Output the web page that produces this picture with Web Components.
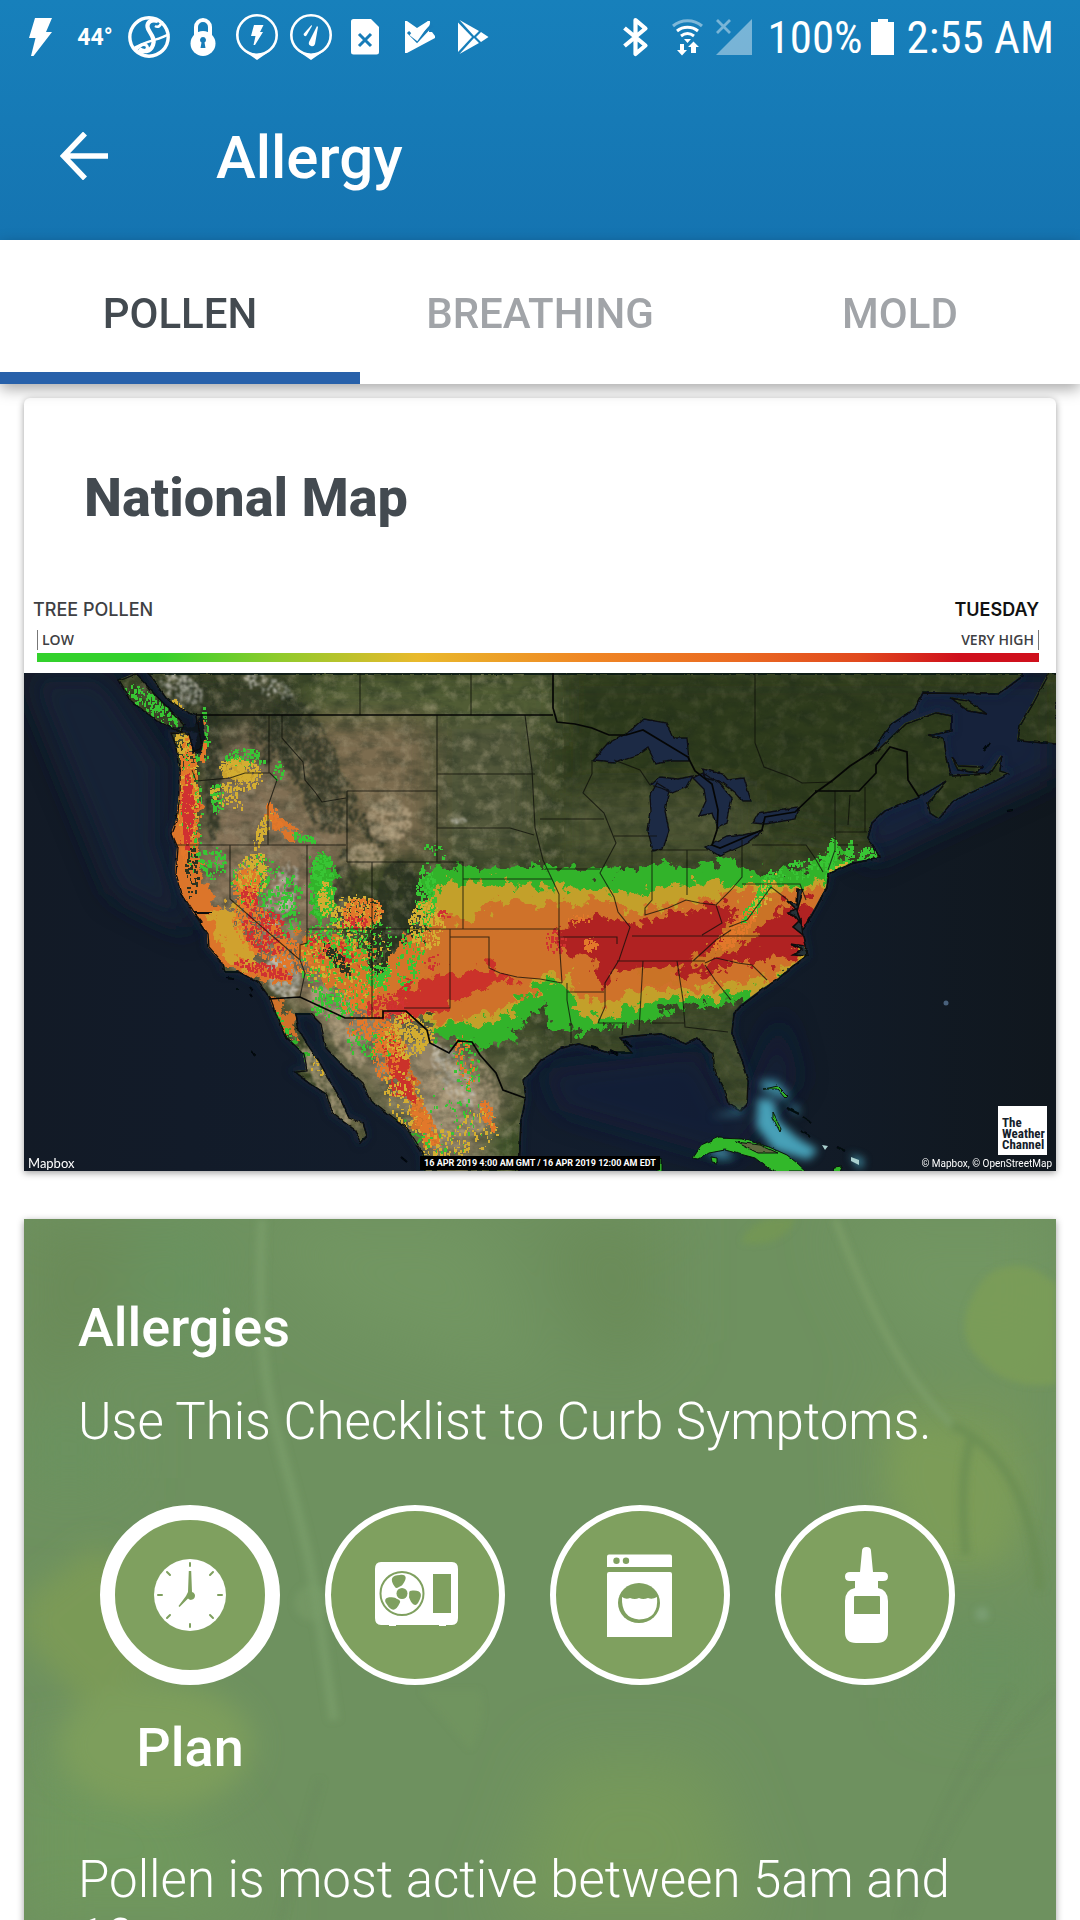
<!DOCTYPE html>
<html lang="en">
<head>
<meta charset="utf-8">
<meta name="viewport" content="width=device-width, initial-scale=1">
<title>Allergy</title>
<style>
  html, body { margin: 0; height: 100%; background: #fff; font-family: Roboto, "Open Sans", sans-serif; }
</style>
</head>
<body>
<allergy-app></allergy-app>
<script>
const define = (name, html, setup) => {
  const template = document.createElement('template');
  template.innerHTML = html;
  customElements.define(name, class extends HTMLElement {
    connectedCallback() {
      if (this.shadowRoot) return;
      const root = this.attachShadow({ mode: 'open' });
      root.append(template.content.cloneNode(true));
      if (setup) setup(this, root);
    }
  });
};

/* ---------- Icons ---------- */
const PIN = '<circle cx="27" cy="35" r="19.7" fill="none" stroke="#fff" stroke-width="2.6"/><path d="M14 51Q27 57 40 51L27 60z"/>';
const BLADE = 'M29 42C23 34 26 30 34 30c7-1 7 4 3 9-1 2-3 2-4 3q-3 2-4 0z';
const ICONS = {
  bolt: ['0 0 54 72', '<path d="M21 18h17L32 32h6L19.5 56H17l4.500-18H15z"/>'],
  script: ['0 0 54 72', '<circle cx="27" cy="37" r="19.2" fill="none" stroke="#fff" stroke-width="3.4"/><g fill="none" stroke="#fff"><path d="M36 21C29 19 25 22 25.500 27S34 37 31 45 21 52 17 49" stroke-width="4.200"/><path d="M40 21C39 26 36 28 33 26" stroke-width="2.6"/><path d="M11 49C22 41 38 40 47 34" stroke-width="2.4"/><path d="M13 51C18 44 23 43 25 46S21 54 17 52" stroke-width="3"/></g>'],
  lock: ['0 0 54 72', '<circle cx="27" cy="43.5" r="12.5"/><path d="M20 36V27a7 7 0 0 1 14 0v9" fill="none" stroke="#fff" stroke-width="4"/><path d="M27 37a3 3 0 0 1 1.500 5.600L29.500 48h-5l1-5.400A3 3 0 0 1 27 37z" fill="#187cb8"/>'],
  pinBolt: ['0 0 54 72', PIN + '<path d="M24 25h9.500L30 32h3L25 45h-1.500l2-9H21z"/>'],
  pinRain: ['0 0 54 72', PIN + '<path d="M33 26 34 27 31 44A3 3 0 0 1 25 42z"/><path d="M27.500 25 28 26 22.500 35.500a1.500 1.500 0 0 1-2.500-2z"/>'],
  fileX: ['0 0 54 72', '<path d="M15.500 19h17.500l8 8v25a2.500 2.500 0 0 1-2.500 2.500h-23A2.500 2.500 0 0 1 13 52V21.500A2.500 2.500 0 0 1 15.500 19z"/><path d="m21 34 12 12m0-12L21 46" stroke="#187cb8" stroke-width="3"/>'],
  check: ['0 0 54 72', '<path d="M13 21h2L25 28 36 21h2l-1 11h3l3 4v2L15 53h-2z"/><path d="m16 32 9 9L40 25" fill="none" stroke="#187cb8" stroke-width="3"/><path d="m18.500 34 6.500 5L37 22" fill="none" stroke="#fff" stroke-width="3"/>'],
  play: ['0 0 54 72', '<path d="M12 22.500 26 37 12 52z"/><path d="M13.500 20 33 31l-5 5zM13.500 54 33 43l-5-5zM35 32l7.500 5-7.500 5-5-5z"/>'],
  bluetooth: ['0 0 54 72', '<path d="m19.500 28 21 17.500L30.500 54V20l10 8.500-21 17.500" fill="none" stroke="#fff" stroke-width="4.200" stroke-linejoin="round"/>'],
  wifi: ['0 0 54 72', '<g fill="none" stroke="#fff" stroke-width="3"><path d="M14 26c8-7 21-7 29 0" opacity=".45"/><path d="M18 31c6-5 15-5 21 0M22 36c4-3 9-3 13 0"/></g><path d="M25 39h7l-3.500 4z"/><path d="M21 44h4v6h3l-5 5.500-5-5.500h3zM32 53h5v-6h3l-5.500-5.500L29 47h3z"/>'],
  signal: ['0 0 54 72', '<g opacity=".42"><path d="M39 19v36H3z"/><path d="m4 20 13 13m0-13L4 33" stroke="#fff" stroke-width="2.8"/></g>'],
  battery: ['0 0 24 72', '<path d="M7 19h10v3h6v33H0V22h7z"/>'],
  clock: ['0 0 100 100', '<circle cx="50" cy="50" r="36"/><g stroke="#7fa05f" stroke-width="2" stroke-linecap="round"><path d="M50 18v3M50 79v3M18 50h4M78 50h4M27 27l3 3M70 30l3-3M27 73l3-3M70 70l3 3"/></g><path d="M48.800 26h2.400l.8 21a4 4 0 1 1-4 6.500L39.500 62l-1-1L46 51l2-4z" fill="#7fa05f"/>'],
  fan: ['0 0 100 100', `<path d="M16 17h71q6 0 6 7v49q0 7-6 7h-6v1h-7v-1H31v1h-7v-1h-8q-6 0-6-7V24q0-7 6-7z"/><g fill="#7fa05f"><path d="M68 29h18v39H68z"/><circle cx="37" cy="48.5" r="21.5" fill="none" stroke="#7fa05f" stroke-width="2"/><circle cx="37" cy="48.5" r="5.5"/><g transform="translate(1 0)"><path d="${BLADE}"/><path d="${BLADE}" transform="rotate(120 36 48.5)"/><path d="${BLADE}" transform="rotate(240 36 48.5)"/></g></g>`],
  washer: ['0 0 100 100', '<path d="M19 9.500h61a2 2 0 0 1 2 2V22H17V11.500a2 2 0 0 1 2-2zM19 27h61a2 2 0 0 1 2 2v63H17V29a2 2 0 0 1 2-2z"/><g fill="#7fa05f"><circle cx="26.5" cy="15.7" r="3.2"/><circle cx="36" cy="15.7" r="3.2"/><ellipse cx="49" cy="58" rx="21" ry="20"/></g><path d="M32 52q4 3 8 1 5 2 9 0 4 2 9 0 4 2 9-1Q69 74 49 74.500 31 73 32 52z"/>'],
  spray: ['0 0 100 100', '<path d="M47 6q0-4 4.500-4T56 6l2 21h10q5 0 5 4.500T68 36h-5v7q10 2 10 13v31q0 11-11 11H41q-11 0-11-11V56q0-11 10-13v-7h-5q-5 0-5-4.500T35 27h10z"/><path d="M40 51h24q1 0 1 1v17H39V52q0-1 1-1z" fill="#7fa05f"/>'],
  back: ['0 0 48 48', '<path d="M25 1.500 3.500 24 25 46.500M4 24h44" fill="none" stroke="#fff" stroke-width="5.5"/>']
};
define('ui-icon', `<style>
  :host { display: block; width: 54px; height: 72px; flex: none; }
  svg { display: block; width: 100%; height: 100%; fill: #fff; }
</style><svg aria-hidden="true"></svg>`, (el, root) => {
  const [box, art] = ICONS[el.getAttribute('name')];
  const svg = root.querySelector('svg');
  svg.setAttribute('viewBox', box);
  svg.innerHTML = art;
});

/* ---------- Status bar and toolbar ---------- */
define('status-bar', `<style>
  :host { display: flex; align-items: center; justify-content: space-between; height: 72px; padding: 0 26px 0 14px; color: #fff; }
  div { display: flex; align-items: center; }
  .temp { width: 54px; padding-top: 4px; text-align: center; font: bold 23px/24px Roboto, sans-serif; }
  .text { padding-top: 4px; font: 45px/48px "Roboto Condensed", Roboto, sans-serif; white-space: nowrap; }
  .battery { width: 24px; margin: 0 12px 0 8px; }
</style>
<div><ui-icon name="bolt"></ui-icon><span class="temp">44°</span><ui-icon name="script"></ui-icon><ui-icon name="lock"></ui-icon><ui-icon name="pinBolt"></ui-icon><ui-icon name="pinRain"></ui-icon><ui-icon name="fileX"></ui-icon><ui-icon name="check"></ui-icon><ui-icon name="play"></ui-icon></div>
<div><ui-icon name="bluetooth"></ui-icon><ui-icon name="wifi"></ui-icon><ui-icon name="signal"></ui-icon><span class="text">100%</span><ui-icon class="battery" name="battery"></ui-icon><span class="text">2:55 AM</span></div>`);

define('app-toolbar', `<style>
  :host { display: flex; align-items: center; gap: 84px; height: 168px; padding: 0 36px; color: #fff; }
  button { display: grid; place-items: center; width: 96px; height: 96px; border: 0; padding: 0; background: none; }
  ui-icon { width: 48px; height: 48px; }
  h1 { margin: 0; padding-top: 4px; font: 500 60px/72px Roboto, sans-serif; }
</style><button aria-label="Back"><ui-icon name="back"></ui-icon></button><h1><slot></slot></h1>`);

define('app-tab', `<style>
  :host { display: block; flex: 1; }
  button { display: block; width: 100%; height: 144px; border: 0; padding: 4px 0 0; background: none; color: #a1a4a8; font: 500 42px/48px Roboto, sans-serif; }
  :host([selected]) button { color: #434a50; box-shadow: inset 0 -12px #2861aa; }
</style><button role="tab"><slot></slot></button>`, (el, root) => {
  root.querySelector('button').setAttribute('aria-selected', el.hasAttribute('selected'));
});
define('tab-bar', `<style>
  :host { display: flex; background: #fff; position: relative; z-index: 1; box-shadow: 0 5px 14px rgba(0,0,0,.34); }
</style><slot></slot>`);

/* ---------- Map card ---------- */
define('pollen-legend', `<style>
  :host { display: block; padding: 7px 17px 11px 9px; color: #3e4043; }
  div { display: flex; justify-content: space-between; }
  .head { font: 500 18px/22px Inter, sans-serif; }
  .head b { font-weight: 600; color: #111; }
  .scale { margin: 9px 0 0 4px; padding: 0 4px; font: 600 14px/20px "Open Sans", sans-serif; border: solid #777; border-width: 0 1px; }
  .bar { height: 9px; margin: 3px 0 0 4px; background: linear-gradient(90deg, #33d12c 12%, #8fcb2c 24%, #e9b92c 38%, #ef8624 55%, #ea6a22 70%, #e14a1e 82%, #cf101c 92%); }
</style>
<div class="head"><span>TREE POLLEN</span><b>TUESDAY</b></div>
<div class="scale"><span>LOW</span><span>VERY HIGH</span></div>
<div class="bar"></div>`);

const LAND = 'M148 673 165 697 179 708 196 715 199 735 201 747 193 752 188 733 170 732 176 747 179 767 179 793 176 820 171 833 177 847 175 873 181 893 193 912 207 933 208 947 222 963 224 971 238 971 258 982 269 997 275 1013 286 1037 303 1053 306 1070 294 1071 310 1083 325 1093 332 1113 355 1130 360 1142 366 1135 362 1122 348 1117 339 1097 327 1077 319 1062 306 1043 298 1030 295 1013 310 1013 320 1023 325 1047 344 1067 362 1083 370 1100 389 1115 406 1128 422 1153 424 1171H518L520 1120 525 1098 523 1080 540 1060 561 1047 578 1043 609 1052 631 1052 619 1037 633 1035 661 1033 685 1043 697 1037 712 1053 714 1070 723 1087 728 1103 740 1110 747 1103 748 1080 740 1057 731 1033 733 1013 740 1005 760 990 778 978 793 965 807 955 802 930 815 907 826 887 828 873 853 862 879 857 867 837 871 822 884 810 917 797 946 780 927 803 929 812 938 818 953 800 995 780 1008 773 999 770 1001 755 989 773 950 775 945 753 943 738 927 735 951 730 951 715 936 712 905 723 877 750 871 753 891 723 914 708 922 692 998 693 1022 675V673z';
const ISLANDS = 'M118 680 135 673 160 700 184 724 181 732 156 720 130 700zM1048 673 1032 703 1019 725 1017 740 1056 743V673zM950 697 967 700 986 713 967 710zM951 757 958 765 982 766 977 772 957 769z';
const LAKES = 'M592 760 607 743 630 730 643 718 666 722 673 737 686 737 688 760 671 760 655 763 647 747 636 755 614 762zM656 782 669 790 664 810 668 830 662 848 652 850 647 830 650 810 649 795zM650 784 659 776 677 778 692 775 686 786 672 792 660 787zM692 777 702 772 719 783 731 797 726 823 717 827 712 812 698 815 705 800 703 788zM702 768 722 773 727 779 743 777 750 800 742 800 735 792 722 782 704 777zM705 847 726 836 742 834 762 830 747 842 719 855zM752 822 757 813 775 810 798 807 795 818 764 823z';
const STATES = 'M360 673V715M471 673V715M269 715V773M282 715V738L303 762 305 780 315 792 322 802 346 798M347 791V862M347 791H437M437 715V862M347 862H463V929M437 774H535M437 828H510L534 835M177 845H346M192 770 196 781 230 778 245 773 270 773 277 780 268 806V845M307 845V943L300 945V960L305 973 300 997M230 845V899L300 960M372 862V1018M307 929H559M463 879H552M450 929V1008H404M450 937H489V968L500 973 517 977 540 979 562 983M525 715 532 770 535 828 543 860 559 894V937L562 983M559 937H617V944M567 983V1000L571 1023V1043M567 992H604M643 961 639 1031M617 961H705M632 936H803M677 961 683 1000 685 1027 728 1032M598 1023H623L622 1035M650 1023H684M592 760V774L583 793 604 813 616 843 600 873 614 897 618 912 630 927 619 960 605 983V1007L598 1023M540 819H604M545 869H600M614 836H657M652 850V900L645 908 645 915 668 908 686 900 700 903 716 905 731 890 742 877V840M687 850V895M708 850H652M742 884H800L806 900M752 845H806L815 858 823 872M702 935 722 923 716 905M693 961 716 940 731 930M705 963 716 958 738 963 752 965 767 980M705 965 715 980 731 1000M729 927 747 920 771 887 788 900M835 791V850L828 870M865 787V832M850 795 848 825M836 832H867M839 845H858M614 760 640 770 650 785M755 673V743L764 767 791 777 802 783 833 782';
const BORDERS = 'M196 715H553M553 673V708L557 722 575 724 592 728 609 735 626 735 643 730 688 757 695 771 712 784 718 810 717 830 712 845 720 848 762 830 765 817 795 812 815 793 833 780 850 766 864 757 877 748M815 791H859L876 773V765L890 747 907 752 908 780 919 797M269 999 300 997 345 1018H383V1011H406L427 1030 430 1043 449 1053 458 1041 472 1042 480 1055 496 1073 503 1090 525 1098';

/* Scattered cells: [colour, centre x, centre y, radius x, radius y, tilt, cell count] */
const G = '#38c534', Y = '#d3ad31', O = '#e2782a', R = '#d03131', DK = '#2b3321', TN = '#b7a585', WH = '#d6d4cb';
const TERRAIN = [
  [WH, 180, 688, 24, 14, 30, 150], [WH, 268, 684, 26, 9, 20, 70], [DK, 200, 700, 40, 25, 0, 170], [DK, 212, 770, 8, 70, 0, 420], [DK, 305, 750, 26, 60, -25, 1300],
  [DK, 265, 735, 16, 26, 0, 200], [DK, 330, 800, 26, 34, -20, 420], [DK, 370, 830, 10, 22, -35, 100], [DK, 398, 905, 22, 46, 0, 1300], [DK, 345, 890, 12, 44, 0, 260],
  [TN, 388, 818, 22, 22, 0, 400], [TN, 365, 855, 18, 12, 0, 200], [WH, 280, 895, 14, 36, 18, 190], [WH, 282, 975, 16, 22, -20, 300], [TN, 330, 1000, 24, 16, 20, 320], [TN, 345, 1040, 10, 30, -30, 260],
  [WH, 452, 1075, 14, 36, -30, 260], [TN, 460, 1095, 38, 40, 0, 700], [TN, 430, 1110, 14, 40, -20, 120], [WH, 458, 820, 7, 3, 0, 16], [TN, 325, 1085, 10, 50, -30, 360]
];
const CELLS = [
  [G, 150, 705, 34, 10, 38, 130], [G, 182, 722, 10, 10, 40, 30], [Y, 180, 708, 12, 3, 50, 26], [G, 204, 735, 4, 30, 0, 50], [O, 195, 722, 10, 5, 0, 24], [Y, 181, 742, 7, 12, 0, 50], [O, 201, 745, 3, 16, 0, 50],
  [G, 191, 805, 11, 66, 0, 120], [Y, 187, 790, 11, 55, 0, 170], [O, 187, 800, 9, 70, 0, 300], [R, 187, 810, 5, 40, 0, 240], [G, 212, 862, 14, 16, 0, 80], [DK, 191, 872, 6, 26, 0, 50],
  [G, 244, 757, 20, 9, 0, 90], [Y, 240, 768, 22, 9, 10, 160], [Y, 240, 783, 22, 6, -10, 70], [G, 216, 797, 7, 16, 0, 60], [Y, 225, 795, 20, 9, 30, 50], [G, 278, 768, 6, 12, 0, 20],
  [Y, 262, 828, 5, 22, 25, 80], [O, 273, 815, 5, 15, -25, 60], [G, 303, 837, 12, 4, 20, 40],
  [G, 255, 880, 26, 28, 0, 130], [Y, 252, 874, 14, 24, 10, 200], [O, 246, 886, 13, 20, 10, 150], [R, 248, 897, 8, 12, 0, 46],
  [G, 322, 884, 13, 34, 0, 200], [Y, 325, 898, 8, 18, 0, 90], [G, 275, 895, 25, 30, 20, 70],
  [O, 258, 930, 20, 34, -40, 320], [R, 265, 930, 20, 26, -40, 200], [G, 290, 910, 10, 34, 0, 70], [R, 262, 968, 30, 6, 15, 110],
  [O, 292, 955, 12, 26, -40, 150], [Y, 355, 912, 26, 18, 0, 200], [G, 350, 935, 45, 20, 0, 160], [O, 362, 910, 20, 14, 0, 200], [R, 355, 922, 14, 6, 0, 50],
  [Y, 345, 960, 46, 40, 0, 260], [G, 345, 965, 48, 40, 20, 260], [DK, 336, 958, 6, 20, -40, 70], [DK, 378, 950, 12, 24, 0, 130], [G, 376, 975, 12, 10, -30, 90], [R, 318, 945, 12, 12, 0, 34],
  [G, 333, 1005, 24, 14, 0, 110], [O, 360, 1000, 20, 18, 0, 120], [R, 385, 1005, 22, 12, -10, 120], [G, 425, 895, 10, 34, 0, 150], [G, 410, 955, 14, 34, 10, 90], [Y, 425, 925, 18, 24, 0, 180], [R, 432, 960, 8, 8, 0, 16], [R, 442, 915, 6, 6, 0, 14],
  [G, 283, 1032, 5, 26, -26, 60], [Y, 318, 1065, 8, 10, -30, 24],
  [G, 372, 1040, 26, 18, 0, 90], [O, 365, 1028, 20, 10, 0, 80], [Y, 405, 1035, 22, 22, 0, 260], [O, 385, 1050, 14, 30, 0, 160], [Y, 420, 1035, 14, 10, 0, 60],
  [Y, 405, 1100, 18, 34, -30, 120], [O, 425, 1125, 8, 28, -25, 160], [Y, 445, 1145, 24, 18, 0, 100], [G, 465, 1060, 14, 30, -10, 70], [O, 464, 1060, 8, 30, -10, 50], [O, 488, 1115, 6, 16, -20, 70], [Y, 475, 1130, 22, 24, 0, 50], [G, 450, 1120, 34, 34, 0, 50],
  [G, 830, 858, 5, 22, 8, 140], [G, 848, 855, 4, 16, 10, 70], [G, 868, 857, 12, 10, 0, 110], [Y, 842, 867, 14, 4, -15, 45], [G, 800, 868, 30, 10, -20, 70], [G, 762, 890, 5, 26, 25, 130], [G, 748, 910, 4, 14, 30, 50], [G, 435, 850, 12, 6, 20, 14],
  [Y, 762, 895, 8, 26, 30, 60], [O, 740, 925, 8, 22, 40, 90], [O, 725, 940, 8, 14, 50, 70], [O, 590, 943, 7, 7, 0, 44], [O, 580, 918, 12, 4, 0, 20], [R, 555, 940, 10, 14, 0, 40]
];
const scatter = list => {
  let seed = 7;
  const rnd = () => (seed = (seed * 16807) % 2147483647) / 2147483647;
  return list.map(([fill, cx, cy, rx, ry, tilt, count]) => {
    const a = tilt * Math.PI / 180, c = Math.cos(a), s = Math.sin(a);
    let d = '';
    for (let i = 0; i < count; i++) {
      const t = rnd() * 6.283, r = Math.sqrt(rnd()), x = rx * r * Math.cos(t), y = ry * r * Math.sin(t);
      const w = 1 + Math.round(rnd() * 2), h = 1 + Math.round(rnd() * 3);
      d += `M${Math.round(cx + x * c - y * s)} ${Math.round(cy + x * s + y * c)}h${w}v${h}h-${w}z`;
    }
    return `<path fill="${fill}" d="${d}"/>`;
  }).join('');
};

define('pollen-map', `<style>
  :host { display: block; position: relative; color: #fff; }
  svg { display: block; width: 100%; height: auto; }
  span { position: absolute; white-space: nowrap; }
  .brand { left: 4px; bottom: 0; font: 13px/16px Lato, sans-serif; }
  .time { left: 50%; bottom: 1px; transform: translateX(-50%); padding: 0 4px; background: #000; font: bold 9px/14px Roboto, sans-serif; }
  .credit { right: 4px; bottom: 0; font: 10px/14px Roboto, sans-serif; }
  .twc { right: 9px; bottom: 16px; box-sizing: border-box; width: 49px; height: 49px; padding: 11px 0 0 4px; background: #fff; color: #14202a; font: bold 13px/11px "Roboto Condensed", Roboto, sans-serif; white-space: normal; }
</style>
<svg viewBox="24 673 1032 498" role="img" aria-label="Tree pollen map of the United States">
  <defs>
    <clipPath id="land"><path d="${LAND}"/><path d="${ISLANDS}"/></clipPath>
    <filter id="soft" x="-30%" y="-30%" width="160%" height="160%"><feGaussianBlur stdDeviation="14"/></filter>
    <filter id="glow" x="-30%" y="-30%" width="160%" height="160%"><feGaussianBlur stdDeviation="4"/></filter>
    <filter id="haze" x="-5%" y="-5%" width="110%" height="110%"><feGaussianBlur stdDeviation="1.2"/></filter>
    <filter id="line" x="-5%" y="-5%" width="110%" height="110%"><feTurbulence baseFrequency=".09" numOctaves="2" seed="9"/><feDisplacementMap in="SourceGraphic" scale="3" xChannelSelector="R" yChannelSelector="G"/></filter>
    <filter id="ragged" x="-5%" y="-5%" width="110%" height="110%"><feTurbulence type="fractalNoise" baseFrequency=".09" numOctaves="4" seed="12"/><feDisplacementMap in="SourceGraphic" scale="30" xChannelSelector="R" yChannelSelector="G"/></filter>
    <filter id="grain" x="0" y="0" width="100%" height="100%"><feTurbulence type="fractalNoise" baseFrequency=".05 .09" numOctaves="6" seed="3"/><feColorMatrix values="0 0 0 0 0.01  0 0 0 0 0.02  0 0 0 0 0.01  2 0 0 0 -.75"/></filter>
    <filter id="light" x="0" y="0" width="100%" height="100%"><feTurbulence type="fractalNoise" baseFrequency=".08" numOctaves="6" seed="21"/><feColorMatrix values="0 0 0 0 .6  0 0 0 0 .52  0 0 0 0 .34  0 2 0 0 -.95"/></filter>
    <linearGradient id="sea"><stop stop-color="#121a26"/><stop offset=".16" stop-color="#121b29"/><stop offset=".6" stop-color="#131e2e"/><stop offset="1" stop-color="#10171e"/></linearGradient>
  </defs>
  <rect x="24" y="673" width="1032" height="498" fill="url(#sea)"/>
  <g filter="url(#soft)"><path d="M850 673h206v100l-130 60-60 30z" fill="#16223a"/><path d="M24 673h80l60 90v80l30 90-80-40z" fill="#142036"/><path d="M540 1070 700 1050 735 1120 780 1010 800 1080 730 1160 560 1110z" fill="#15213a" opacity=".6"/></g>
  <g filter="url(#glow)"><path d="${LAND}" fill="none" stroke="#1d3148" stroke-width="4" opacity=".7"/></g>
  <g clip-path="url(#land)">
    <rect x="24" y="673" width="1032" height="498" fill="#3b4625"/>
    <g filter="url(#soft)">
      <path d="M560 673h500v140l-200 30-300-60z" fill="#2d3b1e"/>
      <path d="M300 673h260v60H310z" fill="#515d36"/>
      <path d="M130 673h150l30 60-20 90-90-50z" fill="#3a412c"/>
      <path d="M310 720h120v140H190l20-80 60-10z" fill="#7c6c50"/>
      <path d="M437 720h100v140H437z" fill="#53583a"/>
      <path d="M225 745l45-15v60l70 40v120l70 40-40 60-200-130z" fill="#857258"/>
      <path d="M290 1000l150 30 60 60 15 80H430l-70-100z" fill="#96866a"/>
      <path d="M355 1055l75 90-10 26-80-100z" fill="#4a5530"/>
      <path d="M480 1120h40v51h-40z" fill="#3f562c"/>
      <path d="M490 1040h60l-20 60-30-10z" fill="#565d3d"/>
      <path d="M530 1020h250l-35 100-50-80H540z" fill="#424d2f"/>
      <path d="M560 790h190v70H560z" fill="#4b5232"/>
      <path d="M330 1060l30 80h20l-50-90z" fill="#a08d6c"/>
    </g>
    <g filter="url(#haze)" opacity=".75">${scatter(TERRAIN)}</g>
    <rect x="24" y="673" width="1032" height="498" filter="url(#grain)" opacity=".4"/>
    <rect x="24" y="673" width="540" height="498" filter="url(#light)" opacity=".4"/>
    <rect x="564" y="673" width="492" height="498" filter="url(#light)" opacity=".14"/>
    <g filter="url(#ragged)">
      <path fill="#33b32a" d="M424 872 463 867 510 870 545 865 581 871 643 868 657 860 688 870 730 858 748 872 780 874 810 866 840 850 850 870 830 900 800 960 765 1000 730 1003 675 1008 645 1022 575 1032 550 1026 545 1002 523 1024 497 1048 472 1045 430 1036 424 950z"/>
      <path fill="#c3a02b" d="M424 895 450 880 540 886 600 890 640 893 670 885 740 882 800 886 850 875 820 930 800 965 765 990 725 997 680 997 640 1005 600 1018 580 1015 570 990 550 980 530 990 510 1015 480 1025 430 1030z"/>
      <path fill="#cf7229" d="M424 915 470 920 500 900 540 905 590 900 640 912 690 900 740 893 810 890 850 880 810 945 780 975 735 983 690 990 640 990 605 1005 575 992 570 975 540 975 525 1000 490 1012 440 1025 424 1000z"/>
      <path fill="#d3752b" d="M300 932l40 4 30 14 4 26 26-36 28-6v84l-24 2h-26l-28-22-40-26-12-20z"/>
      <path fill="#cb3029" d="M454 973 489 966 518 980 485 988 462 997 445 1010 415 1020 385 1018 380 1004 398 1000 402 975 412 990 425 980z"/>
      <path fill="#cb3029" d="M336 948l12-4 8 16-8 8z"/>
      <path fill="#b02422" d="M555 940 564 926 595 914 633 923 657 916 698 910 728 904 736 910 732 930 757 930 784 905 825 900 812 945 784 960 736 963 708 973 681 980 646 970 612 976 595 985 598 960 565 950z"/>
      <path fill="#ca7326" d="M690 965 760 903 785 895 750 940 700 968zM640 970l44-4-4 14-36 2z"/>
      <path fill="#33b32a" d="M446 1027l18-7 5 6-12 5z"/>
      <path fill="#dc7529" d="M176 765h20l4 50-4 40 22 55 20 45 60 18-10 14-50-14-46-20-32-90z"/>
      <path fill="#cb3029" d="M184 790h9l1 42-9 10z"/>
      <path fill="#d0a12f" d="M208 912l18-6 30 48-5 16-25-14z"/>
      <path fill="#33b32a" d="M313 855l16-2 8 30-6 34-16 8-4-30z"/>
      <path fill="#c9a12e" d="M224 762l26 4 10 12-30 4zM238 872l22-8-4 34-20 12z"/>
      <path fill="#dc7529" d="M268 812l14 6 18 16-14 2-18-14z"/>
      <path fill="#cf7229" d="M378 1028l24 0 8 40 22 55 10 30-16-10-26-50-20-40z"/>
      <path fill="#cb3029" d="M384 1034l16 6 4 20 14 40-6 8-14-16-12-32z"/>
      <path fill="#cf7229" d="M272 998l12 2 14 40-6 0-16-22z"/>
      <path fill="#33b32a" d="M280 1020l8 18 20 18-2 4-18-12-14-30zM396 1118l14 12 16 40h-8l-6-24z"/>
    </g>
    ${scatter(CELLS)}
  </g>
  <g filter="url(#line)">
    <path d="${LAKES}" fill="#1f2c45" stroke="#0b0f12" stroke-width="1.3"/>
    <path d="M201 714l4 22-4 16-9 2 5-22-12-2-20-2 28-2z" fill="#10161f"/>
    <path d="M802 890l-6 20 5 14-6-8-8-4 8-3-9-9 10 4 1-16zM800 918l2 16-10-8zM806 955l-14-1 10-5-12-6 14 2" fill="#253038" stroke="#090a0a" stroke-width="1.5"/>
    <path d="${LAND}${ISLANDS}" fill="none" stroke="#080a0c" stroke-width="1.3"/>
    <path d="M193 912h18M193 912l8 10" fill="none" stroke="#080a0c" stroke-width="2"/>
    <path d="M225 977l8 1M235 988h3M249 986l3 4M250 993l2 3M251 1050l3 5M401 1156l6 5M983 750l6-8M1006 810l6-1M609 1050l8 4M623 1040l8 6M590 1045l8 2" fill="none" stroke="#05070a" stroke-width="2"/>
  </g>
  <path d="${STATES}" fill="none" stroke="#0d0f0a" stroke-width="1.1" stroke-opacity=".75"/>
  <path d="${BORDERS}" fill="none" stroke="#050605" stroke-width="1.7"/>
  <g filter="url(#glow)" fill="#46a0b8"><path d="M758 1098l16 2 4 20 20 18 20 12-10 10-34-10-18-24z"/><path d="M760 1080l16 0 14 14-6 6-22-10zM786 1102l14 6-2 8z" opacity=".8"/><path d="M705 1150l16-6 14 14-16 2zM710 1117l30-8 4 5z" opacity=".7"/><path d="M850 1154l14 6-4 10z"/></g>
  <g filter="url(#line)" fill="#32b82b" stroke="#07140a"><path d="M692 1157l8-12 18-8 24 1 26 8 18 8 10 8 10 9h-34l-18-14-30-8-16 3-10 6z"/><path d="M735 1141l24 3 18 8-20 0z" fill="#5e6a3f"/><path d="M710 1156l6 1 0 6-5-1zM772 1112l8 16-1 3-7-14zM763 1088l14-3 10 10-2 2-8-9z"/><path d="M656 1162l5-5v14h-5zM833 1167l8-1-2 5-6 0z"/><path d="M786 1107l12 6M802 1116l8 6M800 1130l10 6M836 1146l8 4" fill="none" stroke="#06090c" stroke-width="2"/></g>
  <path d="M851 1157l8 3 0 5-8-4zM822 1145l6 1-3 4z" fill="#a9cfce"/>
  <circle cx="946" cy="1003" r="2.5" fill="#49617c"/>
</svg>
<span class="brand">Mapbox</span>
<span class="time">16 APR 2019 4:00 AM GMT / 16 APR 2019 12:00 AM EDT</span>
<span class="twc">The Weather Channel</span>
<span class="credit">© Mapbox, © OpenStreetMap</span>`);

define('map-card', `<style>
  :host { display: block; background: #fff; border-radius: 6px 6px 0 0; box-shadow: 0 2px 7px rgba(0,0,0,.38); }
  h2 { margin: 0; padding: 68px 60px 62px; color: #434a50; font: 800 54px/64px Roboto, sans-serif; }
</style><h2><slot></slot></h2><pollen-legend></pollen-legend><pollen-map></pollen-map>`);

/* ---------- Checklist card ---------- */
define('check-step', `<style>
  :host { display: block; width: 180px; color: #fff; text-align: center; }
  button { display: grid; place-items: center; box-sizing: border-box; width: 180px; height: 180px; border: 6px solid #fff; border-radius: 50%; padding: 0; background: #7fa05f; }
  :host([selected]) button { border-width: 15px; }
  ui-icon { width: 100px; height: 100px; }
  span { display: block; margin-top: 31px; font: 500 54px/64px Roboto, sans-serif; }
</style><button></button><span><slot></slot></span>`, (el, root) => {
  const button = root.querySelector('button');
  button.setAttribute('aria-label', el.getAttribute('label'));
  button.innerHTML = `<ui-icon name="${el.getAttribute('icon')}"></ui-icon>`;
});

define('checklist-card', `<style>
  :host { display: block; position: relative; overflow: hidden; padding: 77px 54px; color: #fff; background: #6e915f; box-shadow: 0 2px 7px rgba(0,0,0,.38); }
  svg { position: absolute; inset: 0; width: 100%; height: auto; }
  .body { position: relative; }
  h2 { margin: 0; font: 500 54px/64px Roboto, sans-serif; }
  p { margin: 0; font: 300 51px/58px Roboto, sans-serif; }
  .intro { margin: 33px 0 54px; }
  .steps { display: flex; gap: 45px; padding: 0 22px; }
  .tip { margin-top: 71px; }
</style>
<svg viewBox="24 1219 1032 740" aria-hidden="true">
  <defs><filter id="b1" x="-50%" y="-50%" width="200%" height="200%"><feGaussianBlur stdDeviation="3"/></filter><filter id="b2" x="-50%" y="-50%" width="200%" height="200%"><feGaussianBlur stdDeviation="14"/></filter><filter id="b3" x="-50%" y="-50%" width="200%" height="200%"><feGaussianBlur stdDeviation="32"/></filter></defs>
  <g filter="url(#b3)">
    <path d="M24 1219h110l-20 120-90 60zM540 1219h120v120l-60 30z" fill="#6b8b59"/>
    <path d="M140 1219h80v130h-90zM24 1420h90v60H24zM930 1640h120v60H930z" fill="#69935f"/>
    <path d="M840 1219h216v150l-160-30zM250 1219h230l60 160-200-60z" fill="#729662"/>
    <path d="M560 1760h140l60 160H500z" fill="#76995a"/>
    <path d="M24 1760h140l100 160H24z" fill="#6f985d"/>
    <path d="M880 1400h150v170H890z" fill="#78995a"/>
  </g>
  <g filter="url(#b2)">
    <ellipse cx="155" cy="1745" rx="98" ry="64" fill="#7d9e5c"/>
    <path d="M24 1600 95 1545 150 1580 180 1660 80 1700 24 1640z" fill="#7a9a57"/>
    <path d="M900 1420l90 20 30 50-20 70-80 0-30-80z" fill="#7c9c58"/>
  </g>
  <g filter="url(#b1)">
    <path d="M1056 1284q-36-32-70-8-32 40-16 72 30 44 86 36z" fill="#7c9e56" opacity=".8"/>
    <path d="M742 1240q14-28 54-21-14 30-54 24z" fill="#76994f" opacity=".6"/>
    <path d="M262 1219C256 1360 268 1400 292 1490S316 1600 334 1720" fill="none" stroke="#7b9e6b" stroke-width="10" opacity=".7"/>
    <path d="M835 1219C870 1310 905 1380 952 1425" fill="none" stroke="#7b9d67" stroke-width="6"/>
    <path d="M972 1435q-14 40-6 120M952 1425Q1030 1460 1040 1590" fill="none" stroke="#698c53" stroke-width="9" opacity=".7"/>
    <path d="M1056 1690Q960 1780 910 1920M1010 1690Q940 1800 900 1920M320 1780l-40 140" fill="none" stroke="#678a5b" stroke-width="6" opacity=".5"/>
    <circle cx="312" cy="1603" r="18" fill="#7a9d69" opacity=".5"/><circle cx="982" cy="1614" r="7" fill="#7fa37a" opacity=".7"/>
    <path d="M420 1690h60q8 30-10 60z" fill="#769a61" opacity=".3"/>
  </g>
</svg>
<div class="body">
  <h2>Allergies</h2>
  <p class="intro">Use This Checklist to Curb Symptoms.</p>
  <div class="steps">
    <check-step selected icon="clock" label="Plan">Plan</check-step>
    <check-step icon="fan" label="Air conditioning"></check-step>
    <check-step icon="washer" label="Laundry"></check-step>
    <check-step icon="spray" label="Nasal spray"></check-step>
  </div>
  <p class="tip">Pollen is most active between 5am and 10am.</p>
</div>`);

define('allergy-app', `<style>
  :host { display: flex; flex-direction: column; height: 100vh; overflow: hidden; background: #fff; }
  header { flex: none; background: linear-gradient(#1780bb, #1574b1); }
  tab-bar { flex: none; }
  main { flex: 1; min-height: 0; overflow-y: auto; scrollbar-width: none; display: flex; flex-direction: column; gap: 48px; padding: 14px 24px 0; }
  main > * { flex: none; }
</style>
<header><status-bar></status-bar><app-toolbar>Allergy</app-toolbar></header>
<tab-bar role="tablist"><app-tab selected>POLLEN</app-tab><app-tab>BREATHING</app-tab><app-tab>MOLD</app-tab></tab-bar>
<main><map-card>National Map</map-card><checklist-card></checklist-card></main>`);
</script>
</body>
</html>
